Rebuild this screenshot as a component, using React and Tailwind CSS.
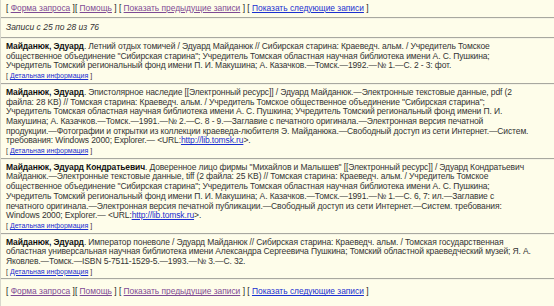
import React from 'react';

const Nav = () => (
  <div className="px-[5px] text-[8.4px] leading-[10px] text-[#222] whitespace-nowrap">
    [ <a className="text-[#7e4a94] underline">Форма запроса</a> ][ <a className="text-[#7e4a94] underline">Помощь</a> ] [{' '}
    <a className="text-[#7e4a94] underline">Показать предыдущие записи</a> ] [{' '}
    <a className="text-[#1b2fd0] underline">Показать следующие записи</a> ]
  </div>
);

const Rule = () => <div className="h-[2px] border-t border-[#a8a8a0] bg-[#f4f3e4]" />;

const Url = () => (
  <>
    &lt;URL:<a className="text-[#1b2fd0] underline">http://lib.tomsk.ru</a>&gt;.
  </>
);

const records = [
  {
    author: 'Майданюк, Эдуард',
    lines: [
      '. Летний отдых томичей / Эдуард Майданюк // Сибирская старина: Краеведч. альм. / Учредитель Томское',
      'общественное объединение "Сибирская старина"; Учредитель Томская областная научная библиотека имени А. С. Пушкина;',
      'Учредитель Томский региональный фонд имени П. И. Макушина; А. Казачков.—Томск.—1992.—№ 1.—С. 2 - 3: фот.',
    ],
  },
  {
    author: 'Майданюк, Эдуард',
    lines: [
      '. Эпистолярное наследие [[Электронный ресурс]] / Эдуард Майданюк.—Электронные текстовые данные, pdf (2',
      'файла: 28 KB) // Томская старина: Краеведч. альм. / Учредитель Томское общественное объединение "Сибирская старина";',
      'Учредитель Томская областная научная библиотека имени А. С. Пушкина; Учредитель Томский региональный фонд имени П. И.',
      'Макушина; А. Казачков.—Томск.—1991.—№ 2.—С. 8 - 9.—Заглавие с печатного оригинала.—Электронная версия печатной',
      'продукции.—Фотографии и открытки из коллекции краеведа-любителя Э. Майданюка.—Свободный доступ из сети Интернет.—Систем.',
      'url:требования: Windows 2000; Explorer.— ',
    ],
  },
  {
    author: 'Майданюк, Эдуард Кондратьевич',
    lines: [
      '. Доверенное лицо фирмы "Михайлов и Малышев" [[Электронный ресурс]] / Эдуард Кондратьевич',
      'Майданюк.—Электронные текстовые данные, tiff (2 файла: 25 KB) // Томская старина: Краеведч. альм. / Учредитель Томское',
      'общественное объединение "Сибирская старина"; Учредитель Томская областная научная библиотека имени А. С. Пушкина;',
      'Учредитель Томский региональный фонд имени П. И. Макушина; А. Казачков.—Томск.—1991.—№ 1.—С. 6, 7: ил.—Заглавие с',
      'печатного оригинала.—Электронная версия печатной публикации.—Свободный доступ из сети Интернет.—Систем. требования:',
      'url:Windows 2000; Explorer.— ',
    ],
  },
  {
    author: 'Майданюк, Эдуард',
    lines: [
      '. Император поневоле / Эдуард Майданюк // Сибирская старина: Краеведч. альм. / Томская государственная',
      'областная универсальная научная библиотека имени Александра Сергеевича Пушкина; Томский областной краеведческий музей; Я. А.',
      'Яковлев.—Томск.—ISBN 5-7511-1529-5.—1993.—№ 3.—С. 32.',
    ],
  },
];

const Record = ({ author, lines }) => (
  <div className="px-[5px] pt-[3px] pb-[2px] text-[8.5px] tracking-[-0.12px] leading-[9.7px] text-[#333] whitespace-nowrap">
    {lines.map((line, i) => {
      const hasUrl = line.startsWith('url:');
      const text = hasUrl ? line.slice(4) : line;
      return (
        <div key={i}>
          {i === 0 && <b className="text-[#111]">{author}</b>}
          {text}
          {hasUrl && <Url />}
        </div>
      );
    })}
    <div className="text-[7px] tracking-normal leading-[9.7px]">
      [ <a className="text-[#1b2fd0] underline">Детальная информация</a> ]
    </div>
  </div>
);

export default function App() {
  return (
    <div
      className="w-[554px] h-[306px] overflow-hidden bg-[#fefdea] border-l border-[#d8d8cc] pt-[3px] flex flex-col"
      style={{ fontFamily: '"Liberation Sans", Arial, sans-serif' }}
    >
      <Nav />
      <div className="h-[4px]" />
      <Rule />
      <div className="px-[5px] pt-[3px] pb-[5px] text-[8.5px] leading-[10px] italic text-[#333]">Записи с 25 по 28 из 76</div>
      <Rule />
      {records.map((r, i) => (
        <React.Fragment key={i}>
          <Record {...r} />
          <Rule />
        </React.Fragment>
      ))}
      <div className="h-[6px]" />
      <Nav />
    </div>
  );
}
